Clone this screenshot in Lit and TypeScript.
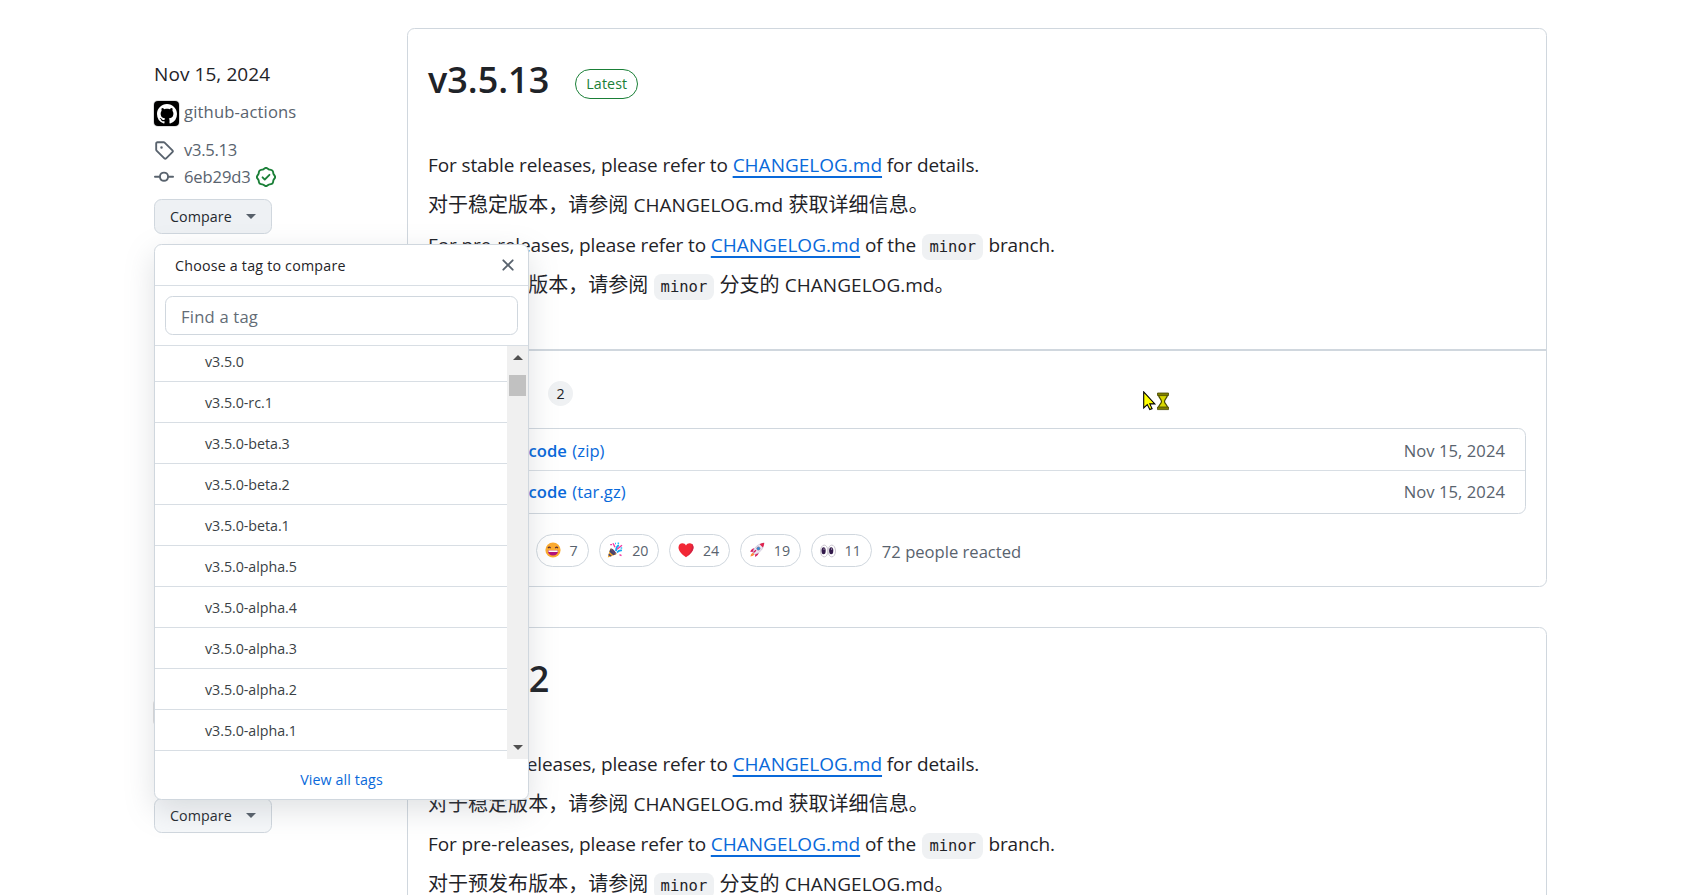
import { LitElement, html, css, svg } from "lit";
import { customElement, property } from "lit/decorators.js";

const MARK = "M8 0c4.42 0 8 3.58 8 8a8.013 8.013 0 0 1-5.45 7.59c-.4.08-.55-.17-.55-.38 0-.27.01-1.13.01-2.2 0-.75-.25-1.23-.54-1.48 1.78-.2 3.65-.88 3.65-3.95 0-.88-.31-1.59-.82-2.15.08-.2.36-1.02-.08-2.12 0 0-.67-.22-2.2.82-.64-.18-1.32-.27-2-.27-.68 0-1.36.09-2 .27-1.53-1.03-2.2-.82-2.2-.82-.44 1.1-.16 1.92-.08 2.12-.51.56-.82 1.28-.82 2.15 0 3.06 1.86 3.75 3.64 3.95-.23.2-.44.55-.51 1.07-.46.21-1.61.55-2.33-.66-.15-.24-.6-.83-1.23-.82-.67.01-.27.38.01.53.34.19.73.9.82 1.13.16.45.68 1.31 2.69.94 0 .67.01 1.3.01 1.49 0 .21-.15.45-.55.38A7.995 7.995 0 0 1 0 8c0-4.42 3.58-8 8-8Z";
const TAG = "M1 7.775V2.75C1 1.784 1.784 1 2.75 1h5.025c.464 0 .91.184 1.238.513l6.25 6.25a1.75 1.75 0 0 1 0 2.474l-5.026 5.026a1.75 1.75 0 0 1-2.474 0l-6.25-6.25A1.752 1.752 0 0 1 1 7.775Zm1.5 0c0 .066.026.13.073.177l6.25 6.25a.25.25 0 0 0 .354 0l5.025-5.025a.25.25 0 0 0 0-.354l-6.25-6.25a.25.25 0 0 0-.177-.073H2.75a.25.25 0 0 0-.25.25ZM6 5a1 1 0 1 1 0 2 1 1 0 0 1 0-2Z";
const COMMIT = "M11.93 8.5a4.002 4.002 0 0 1-7.86 0H.75a.75.75 0 0 1 0-1.5h3.32a4.002 4.002 0 0 1 7.86 0h3.32a.75.75 0 0 1 0 1.5Zm-1.43-.75a2.5 2.5 0 1 0-5 0 2.5 2.5 0 0 0 5 0Z";
const VERIFIED = "m9.585.52.929.68c.153.112.331.186.518.215l1.138.175a2.678 2.678 0 0 1 2.24 2.24l.174 1.139c.029.187.103.365.215.518l.68.928a2.677 2.677 0 0 1 0 3.17l-.68.928a1.174 1.174 0 0 0-.215.518l-.175 1.138a2.678 2.678 0 0 1-2.241 2.241l-1.138.175a1.17 1.17 0 0 0-.518.215l-.928.68a2.677 2.677 0 0 1-3.17 0l-.928-.68a1.174 1.174 0 0 0-.518-.215L3.83 14.41a2.678 2.678 0 0 1-2.24-2.24l-.175-1.138a1.17 1.17 0 0 0-.215-.518l-.68-.928a2.677 2.677 0 0 1 0-3.17l.68-.928c.112-.153.186-.331.215-.518l.175-1.14a2.678 2.678 0 0 1 2.24-2.24l1.139-.175c.187-.029.365-.103.518-.215l.928-.68a2.677 2.677 0 0 1 3.17 0ZM7.303 1.728l-.927.68a2.67 2.67 0 0 1-1.18.489l-1.137.174a1.179 1.179 0 0 0-.987.987l-.174 1.136a2.677 2.677 0 0 1-.489 1.18l-.68.928a1.18 1.18 0 0 0 0 1.394l.68.927c.256.348.424.753.489 1.18l.174 1.137c.078.509.478.909.987.987l1.136.174a2.67 2.67 0 0 1 1.18.489l.928.68c.414.305.979.305 1.394 0l.927-.68a2.67 2.67 0 0 1 1.18-.489l1.137-.174a1.18 1.18 0 0 0 .987-.987l.174-1.136a2.67 2.67 0 0 1 .489-1.18l.68-.928a1.176 1.176 0 0 0 0-1.394l-.68-.927a2.686 2.686 0 0 1-.489-1.18l-.174-1.137a1.179 1.179 0 0 0-.987-.987l-1.136-.174a2.677 2.677 0 0 1-1.18-.489l-.928-.68a1.176 1.176 0 0 0-1.394 0ZM11.28 6.78l-3.75 3.75a.75.75 0 0 1-1.06 0L4.72 8.78a.751.751 0 0 1 .018-1.042.751.751 0 0 1 1.042-.018L7 8.94l3.22-3.22a.751.751 0 0 1 1.042.018.751.751 0 0 1 .018 1.042Z";
const CLOSE = "M3.72 3.72a.75.75 0 0 1 1.06 0L8 6.94l3.22-3.22a.749.749 0 0 1 1.275.326.749.749 0 0 1-.215.734L9.06 8l3.22 3.22a.749.749 0 0 1-.326 1.275.749.749 0 0 1-.734-.215L8 9.06l-3.22 3.22a.751.751 0 0 1-1.042-.018.751.751 0 0 1-.018-1.042L6.94 8 3.72 4.78a.75.75 0 0 1 0-1.06Z";

const icon = (d: string, cls = "icon") => html`<svg class=${cls} viewBox="0 0 16 16"><path d=${d} fill="currentColor" /></svg>`;

const EMOJI: Record<string, unknown> = {
  laugh: svg`<circle cx="8" cy="8" r="7.6" fill="#fcab2f"/><path d="M3 6.1q1.2-1.9 2.6 0M10.3 6.1q1.3-1.9 2.6 0" fill="none" stroke="#5a2d35" stroke-width="1.2"/><path d="M2.8 8.4h10.4q-.5 5-5.2 5t-5.2-5Z" fill="#b3127e"/><path d="M3.4 8.4h9.2v1.7H3.6Z" fill="#fff"/>`,
  tada: svg`<path d="M3.4 6.2 9.8 12 .8 15.6Z" fill="#f5a623"/><path d="M3.3 7l5.6 5.2-2.7 1.1L2.4 9.7ZM1.9 11.6l3 2.3-1.6.7-2-1.4Z" fill="#44436e"/><path d="M3.6 6.2q3 .4 6 5.6-4-.8-6-5.6Z" fill="#533f73"/><path d="M9 9q0-4 2.8-6M10 10.5q2-2.5 5-2" fill="none" stroke="#16a8f0" stroke-width="1.7"/><path d="M6 1.2l2 4M10 7.2l5-4M3.2 2.6h1.8M12.5 12.6l2 1" stroke="#f03aa2" stroke-width="1.4"/><path d="M10.6 1.2h1.5M13.6 6h1.6M8 1.6h1" stroke="#28bdf5" stroke-width="1.5"/>`,
  heart: svg`<path d="M8 15.3C3.6 11.8.5 9 .5 5.4.5 2.8 2.3 1.2 4.4 1.2 6 1.2 7.3 2 8 3.4 8.7 2 10 1.2 11.6 1.2c2.1 0 3.9 1.6 3.9 4.2 0 3.6-3.1 6.4-7.5 9.9Z" fill="#f22735"/><path d="M9 14.4c4-3.2 6.5-5.8 6.5-9 0-1.5-.6-2.7-1.5-3.4.3 5-2 9-5 12.4Z" fill="#d02245"/>`,
  rocket: svg`<path d="M1.4 14.6q0-3 2.6-4.2l1.8 1.7q-1.2 2.4-4.4 2.5Z" fill="#ff8a3c"/><path d="M5.3 6.3Q2.6 6.5 1.2 9.8l3 .2ZM9.8 10.8Q9.4 13.4 6.3 15l-.4-3Z" fill="#d81b60"/><path d="M3.7 10.2Q6.4 2 15 1q-.6 8.5-9.1 11.5Z" fill="#ece5f2" stroke="#b9adc6" stroke-width=".5"/><path d="M10.6 2.2Q12.6 1 15.2.8q0 2.6-1.3 4.8Z" fill="#e0234e"/><circle cx="9.4" cy="6.5" r="1.6" fill="#2a8fe0" stroke="#6f6b86" stroke-width=".7"/><path d="M4.5 10.5 7 8.3" stroke="#d81b60" stroke-width="1.3"/>`,
  eyes: svg`<ellipse cx="4.2" cy="9" rx="3.7" ry="5.9" fill="#fff" stroke="#b4adbb" stroke-width=".7"/><ellipse cx="11.8" cy="9" rx="3.7" ry="5.9" fill="#fff" stroke="#b4adbb" stroke-width=".7"/><ellipse cx="3.6" cy="8.7" rx="2.1" ry="3.5" fill="#32194a"/><ellipse cx="11.2" cy="8.7" rx="2.1" ry="3.5" fill="#32194a"/><circle cx="4" cy="7" r=".6" fill="#fff"/><circle cx="11.6" cy="7" r=".6" fill="#fff"/>`,
};

const shared = css`
  * { box-sizing: border-box; }
  .icon { display: block; width: 20px; height: 20px; flex: none; }
`;

@customElement("tag-picker")
class TagPicker extends LitElement {
  static styles = [shared, css`
    :host { display: block; box-sizing: border-box; width: 375px; height: 556px; background: #fff; border: 1px solid #d0d7de; border-radius: 7.5px;
      box-shadow: 0 10px 30px rgba(110, 119, 129, .22); overflow: hidden; font-size: 14.25px; color: #1f2328; }
    .frame { display: flex; flex-direction: column; height: 100%; }
    .head { display: flex; justify-content: space-between; align-items: center; height: 41px; padding: 0 10px 0 20px; border-bottom: 1px solid #d8dee4; flex: none; font-weight: 500; letter-spacing: .21px; }
    .head .icon { color: #59636e; }
    .search { height: 60px; flex: none; padding: 10px 10px 0; border-bottom: 1px solid #d8dee4; }
    .input { height: 39px; border: 1px solid #d0d7de; border-radius: 7.5px; display: flex; align-items: center; padding: 1px 15px 0; font-size: 16.6px; letter-spacing: .2px; color: #636c76; }
    .body { display: flex; height: 413px; flex: none; }
    .rows { flex: 1; overflow: hidden; display: flex; flex-direction: column; }
    .row { height: 41px; flex: none; border-bottom: 1px solid #d8dee4; padding-left: 50px; display: flex; align-items: center; color: #3a3f45; letter-spacing: -.04px; }
    .row:first-child { height: 36px; padding-bottom: 4px; }
    .bar { width: 21px; background: #f0f0f0; display: flex; flex-direction: column; align-items: center; }
    .up { margin-top: 9px; border: 5px solid transparent; border-top: 0; border-bottom-color: #505050; }
    .thumb { margin-top: 15px; width: 17px; height: 21px; background: #c1c1c1; }
    .down { margin: auto 0 9px; border: 5px solid transparent; border-bottom: 0; border-top-color: #505050; }
    .foot { flex: 1; display: flex; justify-content: center; align-items: center; color: #0969da; letter-spacing: .12px; }
  `];
  tags = ["", "-rc.1", "-beta.3", "-beta.2", "-beta.1", "-alpha.5", "-alpha.4", "-alpha.3", "-alpha.2", "-alpha.1"];
  render() {
    return html`<div class="frame">
      <div class="head"><span>Choose a tag to compare</span>${icon(CLOSE)}</div>
      <div class="search"><div class="input">Find a tag</div></div>
      <div class="body">
        <div class="rows">${this.tags.map((t) => html`<div class="row">v3.5.0${t}</div>`)}</div>
        <div class="bar"><div class="up"></div><div class="thumb"></div><div class="down"></div></div>
      </div>
      <div class="foot">View all tags</div>
    </div>`;
  }
}

@customElement("release-entry")
class ReleaseEntry extends LitElement {
  @property() version = "";
  @property() commit = "";
  @property({ type: Boolean }) latest = false;
  @property({ type: Boolean }) open = false;
  static styles = [shared, css`
    :host { display: grid; grid-template-columns: 253px 1140px; height: 559px; }
    .side { padding-top: 31px; color: #59636e; font-size: 16.6px; display: flex; flex-direction: column; align-items: flex-start; }
    .date { font-size: 19px; line-height: 30px; color: #1f2328; letter-spacing: .08px; }
    .author { display: flex; align-items: center; height: 26px; margin-top: 10px; gap: 5px; letter-spacing: .15px; }
    .author span { padding-bottom: 1px; }
    .avatar { width: 25px; height: 25px; margin-top: 3px; border-radius: 4px; background: #000; color: #fff; padding: 2.5px; box-shadow: 0 0 0 1px rgba(31, 35, 40, .15); }
    .meta { display: flex; align-items: center; gap: 10px; height: 26px; letter-spacing: -.12px; }
    .meta span { padding-bottom: 1px; }
    .tag { margin-top: 11px; height: 28px; letter-spacing: -.3px; }
    .meta .seal { color: #1a7f37; margin-left: -5px; }
    .compare { position: relative; margin-top: 9px; }
    .button { width: 118px; height: 35px; border: 1px solid #d0d7de; border-radius: 7.5px; background: #f6f8fa; color: #24292f; display: flex; align-items: center; padding-left: 15px; gap: 14px; font-size: 14.25px; font-weight: 500; letter-spacing: .08px; }
    .button.on { background: #eef1f4; }
    .caret { border: 5px solid transparent; border-top-color: #57606a; border-bottom: 0; }
    tag-picker { position: absolute; left: 0; top: 45px; z-index: 5; letter-spacing: 0; }
    .card { border: 1px solid #d0d7de; border-radius: 7.5px; color: #1f2328; display: flex; flex-direction: column; }
    .notes { height: 322px; padding: 26px 20px 0; border-bottom: 2px solid #d0d7de; flex: none; }
    .title { display: flex; align-items: center; gap: 26px; height: 50px; }
    h1 { margin: 0; font-size: 36px; font-weight: 600; line-height: 50px; }
    .badge { height: 30px; width: 63px; margin-top: 7px; border: 1px solid #1a7f37; color: #1a7f37; border-radius: 15px; display: flex; justify-content: center; align-items: center; font-size: 14.25px; font-weight: 500; letter-spacing: .1px; }
    .text { margin-top: 40px; font-size: 19px; }
    p { margin: 0; height: 40px; line-height: 40px; white-space: nowrap; letter-spacing: -.12px; }
    .zh { font-size: 20px; letter-spacing: .03px; }
    .zh span { font-size: 19px; }
    a { color: #0969da; }
    p a { letter-spacing: 0; text-decoration: underline; text-decoration-thickness: 2px; text-underline-offset: 4px; text-decoration-skip-ink: none; }
    code { font: 15.5px "DejaVu Sans Mono", monospace; letter-spacing: 0; background: #eff1f3; border-radius: 7.5px; padding: 4px 7px; margin: 0 .5px 0 1.5px; }
    .zh code { margin: 0; }
    .assets { padding: 30px 20px 0 21px; }
    .summary { display: flex; align-items: center; height: 25px; gap: 22px; font-size: 19px; font-weight: 600; padding-left: 33px; }
    .summary .label { width: 64px; }
    .count { width: 25px; height: 25px; border-radius: 13px; background: #eff1f3; font-size: 14.25px; font-weight: 500; display: flex; justify-content: center; align-items: center; }
    .files { margin-top: 22px; border: 1px solid #d0d7de; border-radius: 7.5px; height: 86px; font-size: 16.6px; }
    .file { display: flex; justify-content: space-between; align-items: center; height: 41px; padding: 2px 20px 0 39px; color: #59636e; letter-spacing: .06px; }
    .file + .file { border-top: 1px solid #d8dee4; padding-top: 1px; }
    b { font-weight: 600; margin-right: 1px; }
    .reactions { display: flex; align-items: center; gap: 10px; padding-left: 107px; margin-top: 19.5px; color: #59636e; }
    .pill { display: flex; align-items: center; height: 33px; border: 1px solid #d0d7de; border-radius: 17px; padding: 0 10px 0 7.5px; gap: 9px; font-size: 14.25px; }
    .pill svg { width: 16px; height: 16px; }
    .total { font-size: 16.6px; padding-top: 2px; }
  `];
  render() {
    const r: [string, number][] = [["laugh", 7], ["tada", 20], ["heart", 24], ["rocket", 19], ["eyes", 11]];
    return html`
      <div class="side">
        <div class="date">Nov 15, 2024</div>
        <div class="author"><div class="avatar">${icon(MARK)}</div><span>github-actions</span></div>
        <div class="meta tag">${icon(TAG)}<span>${this.version}</span></div>
        <div class="meta">${icon(COMMIT)}<span>${this.commit}</span>${icon(VERIFIED, "icon seal")}</div>
        <div class="compare"><div class="button ${this.open ? "on" : ""}">Compare<span class="caret"></span></div>
        ${this.open ? html`<tag-picker></tag-picker>` : ""}</div>
      </div>
      <div class="card">
        <div class="notes">
          <div class="title"><h1>${this.version}</h1>${this.latest ? html`<span class="badge">Latest</span>` : ""}</div>
          <div class="text">
            <p>For stable releases, please refer to <a>CHANGELOG.md</a> for details.</p>
            <p class="zh">对于稳定版本，请参阅 <span>CHANGELOG.md</span> 获取详细信息。</p>
            <p>For pre-releases, please refer to <a>CHANGELOG.md</a> of the <code>minor</code> branch.</p>
            <p class="zh">对于预发布版本，请参阅 <code>minor</code> 分支的 <span>CHANGELOG.md</span>。</p>
          </div>
        </div>
        <div class="assets">
          <div class="summary"><span class="label">Assets</span><span class="count">2</span></div>
          <div class="files">
            <div class="file"><a><b>Source code</b> (zip)</a><span>Nov 15, 2024</span></div>
            <div class="file"><a><b>Source code</b> (tar.gz)</a><span>Nov 15, 2024</span></div>
          </div>
          <div class="reactions">
            ${r.map(([n, c]) => html`<span class="pill"><svg viewBox="0 0 16 16">${EMOJI[n]}</svg>${c}</span>`)}
            <span class="total">72 people reacted</span>
          </div>
        </div>
      </div>`;
  }
}

@customElement("app-root")
class AppRoot extends LitElement {
  static styles = css`
    :host { display: block; position: relative; height: 895px; overflow: hidden; background: #fff; font-family: "Open Sans", "Noto Sans CJK SC", sans-serif; }
    .list { display: flex; flex-direction: column; gap: 40px; padding: 28px 0 0 154px; }
    .pointer { position: absolute; left: 1143px; top: 391px; width: 27px; height: 20px; }
  `;
  render() {
    return html`<div class="list">
        <release-entry version="v3.5.13" commit="6eb29d3" latest open></release-entry>
        <release-entry version="v3.5.12" commit="2d3ed47"></release-entry>
      </div>
      <svg class="pointer" viewBox="0 0 27 20"><path d="M.7.9v16l3.6-3.3 2.5 5 2.3-1-2.3-4.7h5Z" fill="#ff0" stroke="#000" stroke-width="1.1"/>
        <path d="M15.500 3.500c0 3.500 3 4.500 3 7s-3 3-3 6.500h9c0-3.500-3-4-3-6.500s3-3.500 3-7Z" fill="#d8d800" stroke="#4a4a00" stroke-width="1.2"/><path d="M14.500 2h11v2.600h-11zM14.500 16h11v2.600h-11z" fill="#808000" stroke="#4a4a00" stroke-width=".8"/></svg>`;
  }
}
